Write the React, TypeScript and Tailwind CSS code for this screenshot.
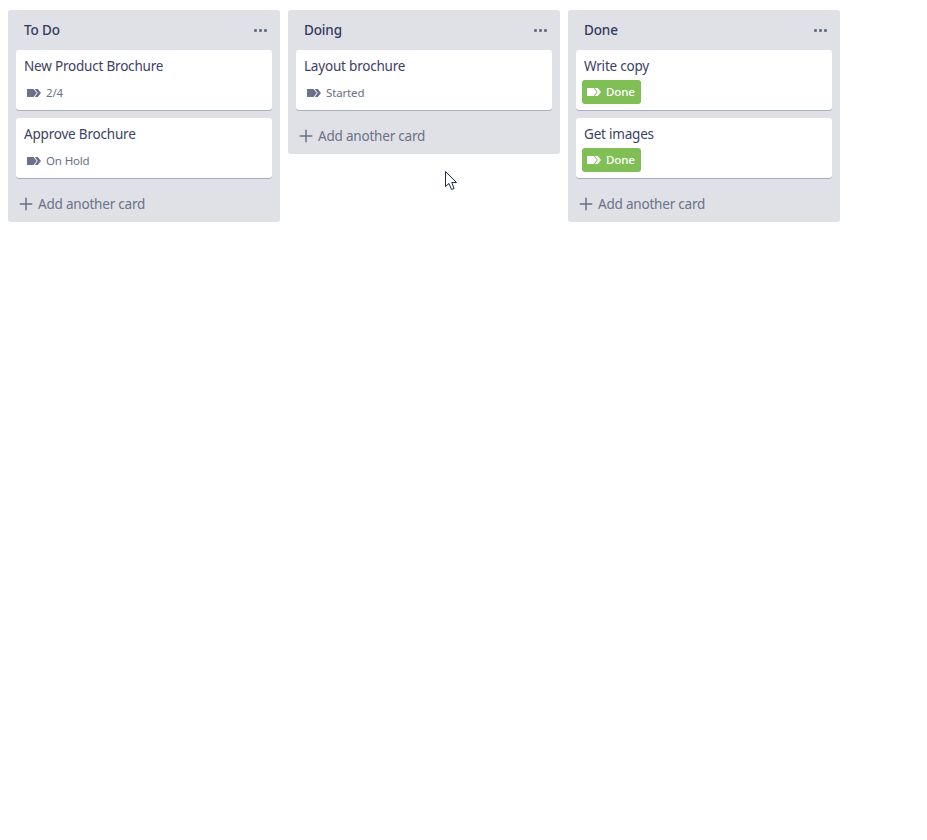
import { Plus } from "lucide-react";

type Card = { title: string; status: string; done?: boolean };

const columns: { name: string; cards: Card[] }[] = [
  {
    name: "To Do",
    cards: [
      { title: "New Product Brochure", status: "2/4" },
      { title: "Approve Brochure", status: "On Hold" },
    ],
  },
  { name: "Doing", cards: [{ title: "Layout brochure", status: "Started" }] },
  {
    name: "Done",
    cards: [
      { title: "Write copy", status: "Done", done: true },
      { title: "Get images", status: "Done", done: true },
    ],
  },
];

const StatusIcon = ({ className }: { className: string }) => (
  <svg viewBox="0 0 14 8" className={className} fill="currentColor">
    <path d="M0 0h6.6l3.2 4-3.2 4H0z" />
    <path d="M7.8 0h3L14 4l-3.2 4h-3l2.9-4z" />
  </svg>
);

const Cursor = () => (
  <svg viewBox="0 0 13 20" className="absolute left-[445px] top-[171px] h-[20px] w-[13px]">
    <path d="M0.5 0.5V15.5L4 12.5L6.5 18.5L9 17.5L6.8 11.5H11.5Z" fill="#fff" stroke="#1f2a44" strokeWidth="1" />
  </svg>
);

const App = () => {
  return (
    <div className="relative h-[840px] bg-white font-['Noto_Sans','Open_Sans',sans-serif]">
      <div className="flex items-start gap-2 pl-2 pt-[10px]">
        {columns.map((col) => (
          <div key={col.name} className="w-[272px] rounded-[3px] bg-[#dfe1e6]">
            <div className="flex h-10 items-center justify-between pl-4 pr-[13px]">
              <span className="text-[13.5px] font-medium tracking-[-0.15px] text-[#333b5e]">{col.name}</span>
              <div className="flex gap-[2px]">
                <span className="h-[3px] w-[3px] rounded-[1px] bg-[#6b7189]" />
                <span className="h-[3px] w-[3px] rounded-[1px] bg-[#6b7189]" />
                <span className="h-[3px] w-[3px] rounded-[1px] bg-[#6b7189]" />
              </div>
            </div>
            <div className="flex flex-col gap-2 px-2">
              {col.cards.map((card) => (
                <div
                  key={card.title}
                  className="h-[60px] rounded-[3px] bg-white pt-[6px] shadow-[0_1px_0_#a9adc0]"
                >
                  <div className="pl-2 text-[13.5px] leading-5 tracking-[-0.2px] text-[#3b4264]">{card.title}</div>
                  {card.done ? (
                    <div className="ml-[6px] mt-1 flex h-6 w-[59px] items-center gap-[5px] rounded-[3px] bg-[#7fbf55] pl-[5px] text-[11.5px] font-medium tracking-[-0.15px] text-white">
                      <StatusIcon className="h-2 w-[14px] text-white" />
                      Done
                    </div>
                  ) : (
                    <div className="ml-[11px] mt-1 flex h-6 items-center gap-[5px] pt-[2px] text-[11.5px] tracking-[-0.15px] text-[#6b7189]">
                      <StatusIcon className="h-2 w-[14px] text-[#6b7189]" />
                      {card.status}
                    </div>
                  )}
                </div>
              ))}
            </div>
            <div className="flex h-11 items-center gap-[2px] pl-2 pt-[9px] text-[13.5px] tracking-[-0.2px] text-[#6b7189]">
              <Plus className="-mt-[1px] h-5 w-5" strokeWidth={1.8} />
              Add another card
            </div>
          </div>
        ))}
      </div>
      <Cursor />
    </div>
  );
};

export default App;
